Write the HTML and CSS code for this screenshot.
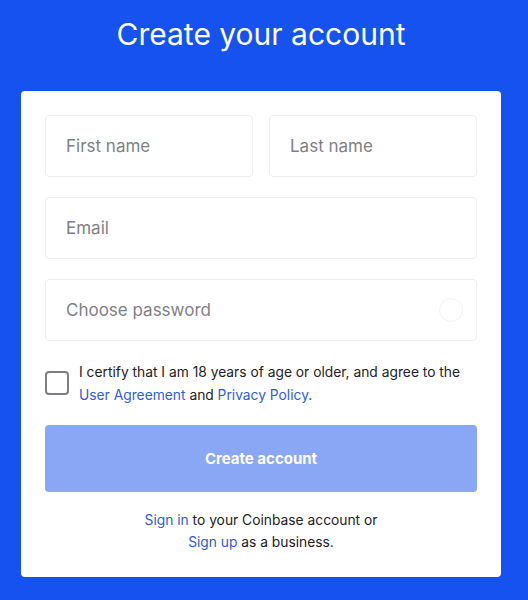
FILE: index.html
```html
<!DOCTYPE html>
<html>
<head>
<meta charset="utf-8">
<link rel="stylesheet" href="styles.css">
</head>
<body>
<div class="page">
  <h1 class="title">Create your account</h1>
  <div class="card">
    <div class="row">
      <div class="field"><span class="ph">First name</span></div>
      <div class="field"><span class="ph">Last name</span></div>
    </div>
    <div class="field"><span class="ph">Email</span></div>
    <div class="field pw"><span class="ph">Choose password</span><span class="circle"></span></div>
    <div class="check">
      <span class="box"></span>
      <p class="certify">I certify that I am 18 years of age or older, and agree to the <a>User Agreement</a> and <a>Privacy Policy</a>.</p>
    </div>
    <div class="btn">Create account</div>
    <p class="foot"><a>Sign in</a> to your Coinbase account or<br><a>Sign up</a> as a business.</p>
  </div>
</div>
</body>
</html>
```
FILE: styles.css
```css
* { box-sizing: border-box; }
html, body { margin: 0; padding: 0; }
body { background: #1652f0; font-family: Inter, "Liberation Sans", sans-serif; width: 528px; height: 600px; overflow: hidden; }
.page { padding: 0 27px 0 21px; }
.title { margin: 0; padding-top: 14px; height: 91px; text-align: center; color: #fff; font-weight: 400; font-size: 30px; line-height: 40px; }
.card { background: #fff; border-radius: 4px; padding: 24px 24px 0; height: 486px; display: flex; flex-direction: column; }
.row { display: flex; gap: 16px; margin-bottom: 20px; }
.row .field { flex: 1; margin-bottom: 0; }
.field { height: 62px; border: 1px solid #eceef1; border-radius: 4px; display: flex; align-items: center; padding: 0 20px; margin-bottom: 20px; }
.ph { color: #7f8085; font-size: 17px; }
.pw { justify-content: space-between; padding-right: 13px; }
.circle { width: 24px; height: 24px; border-radius: 50%; border: 1px solid #f0f1f3; }
.check { display: flex; gap: 10px; margin-top: 0; }
.box { flex: none; width: 24px; height: 24px; border: 2px solid #7d7f84; border-radius: 4px; margin-top: 10px; }
.certify { margin: 0; font-size: 13.8px; line-height: 23px; color: #1e2025; }
a { color: #2f5bdc; }
.btn { margin-top: 18px; height: 67px; background: #8aa7f6; border-radius: 4px; color: #fff; font-weight: 700; font-size: 15px; display: flex; align-items: center; justify-content: center; }
.foot { margin: 17px 0 0; text-align: center; font-size: 13.8px; line-height: 22px; color: #1e2025; }
```
